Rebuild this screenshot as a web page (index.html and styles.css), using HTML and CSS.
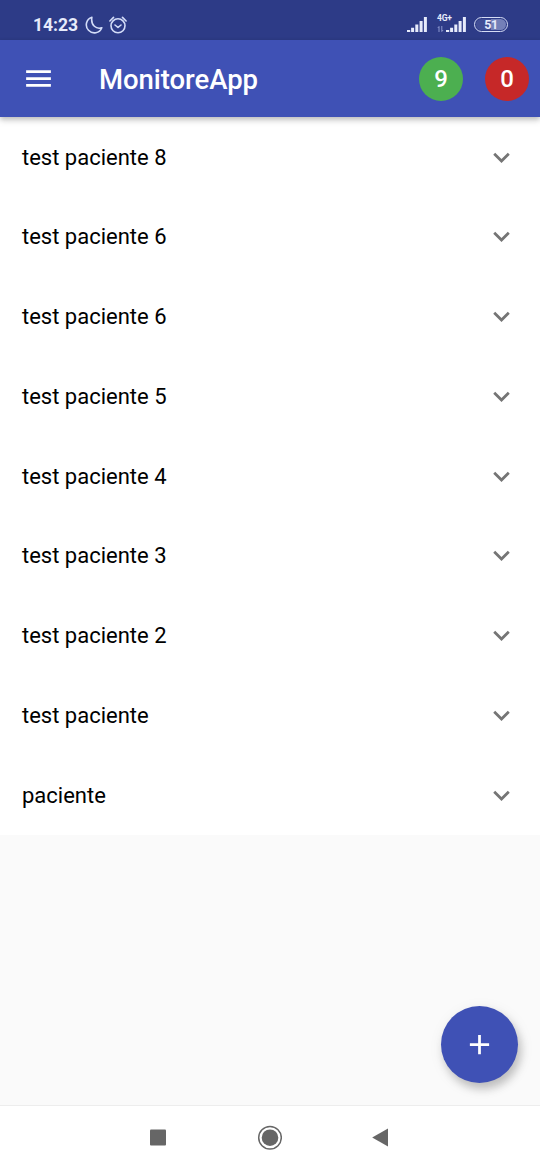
FILE: index.html
```html
<!DOCTYPE html>
<html lang="es">
<head>
<meta charset="utf-8">
<title>MonitoreApp</title>
<link rel="stylesheet" href="styles.css">
</head>
<body>
<svg class="defs" width="0" height="0" aria-hidden="true">
  <symbol id="chevron" viewBox="0 0 24 24"><path d="M16.59 8.59L12 13.17 7.41 8.59 6 10l6 6 6-6z"/></symbol>
  <symbol id="signal" viewBox="0 0 20 15"><path d="M0 13h3.200v2H0zM4.100 10.800h3V15h-3zM8.300 7.500h3V15h-3zM12.600 4h3v11h-3zM16.900 0h3v15h-3z"/></symbol>
</svg>
<div class="screen">
  <div class="status">
    <span class="clock">14:23</span>
    <svg class="moon" viewBox="0 0 18 18"><path d="M6.900 1.200A8 8 0 1 0 16.800 11.700C11.500 13.500 5.500 9.500 6.900 1.200z"/></svg>
    <svg class="alarm" viewBox="0 0 18 18"><circle cx="9" cy="9.800" r="7"/><path d="M6 9l3 2.500L12 9M.9 5L4.500 1.400M17.100 5L13.500 1.400"/></svg>
    <span class="spacer"></span>
    <svg class="signal"><use href="#signal"/></svg>
    <div class="mobile">
      <div class="network"><span class="gen">4G+</span>
        <svg class="traffic" viewBox="0 0 6 6"><path d="M1.500 6V.5L.3 2M4.300 0v5.500L5.600 4"/></svg>
      </div>
      <svg class="signal"><use href="#signal"/></svg>
    </div>
    <div class="battery">51</div>
  </div>
  <header class="appbar">
    <svg class="menu" viewBox="0 0 24 24"><path d="M3 18h18v-2H3v2zm0-5h18v-2H3v2zm0-7v2h18V6H3z"/></svg>
    <h1 class="title">MonitoreApp</h1>
    <span class="badge ok">9</span>
    <span class="badge alert">0</span>
  </header>
  <main class="content">
    <ul class="list">
      <li class="row">test paciente 8<svg class="chevron"><use href="#chevron"/></svg></li>
      <li class="row">test paciente 6<svg class="chevron"><use href="#chevron"/></svg></li>
      <li class="row">test paciente 6<svg class="chevron"><use href="#chevron"/></svg></li>
      <li class="row">test paciente 5<svg class="chevron"><use href="#chevron"/></svg></li>
      <li class="row">test paciente 4<svg class="chevron"><use href="#chevron"/></svg></li>
      <li class="row">test paciente 3<svg class="chevron"><use href="#chevron"/></svg></li>
      <li class="row">test paciente 2<svg class="chevron"><use href="#chevron"/></svg></li>
      <li class="row">test paciente<svg class="chevron"><use href="#chevron"/></svg></li>
      <li class="row">paciente<svg class="chevron"><use href="#chevron"/></svg></li>
    </ul>
    <button class="fab" aria-label="Agregar"><svg viewBox="0 0 24 24"><path d="M19 13h-6v6h-2v-6H5v-2h6V5h2v6h6v2z"/></svg></button>
  </main>
  <nav class="navbar">
    <svg viewBox="0 0 26 26"><rect x="5" y="4.500" width="16" height="16" rx="1"/></svg>
    <svg viewBox="0 0 26 26"><circle cx="14" cy="12.700" r="8.300"/><circle class="ring" cx="14" cy="12.700" r="11.300"/></svg>
    <svg viewBox="0 0 26 26"><path d="M21 3.500v18L5.200 12.500z"/></svg>
  </nav>
</div>
</body>
</html>
```

FILE: styles.css
```css
* { box-sizing: border-box; }
body { margin: 0; font-family: Roboto, sans-serif; }
.defs { display: none; }
.screen { width: 540px; height: 1170px; display: flex; flex-direction: column; background: #fafafa; overflow: hidden; }

.status { height: 40px; flex: none; display: flex; align-items: center; padding: 9px 32px 0 33px; background: #2d3b87; color: #e6ebfb; }
.clock { font-size: 17.500px; font-weight: 700; line-height: 20px; width: 52px; }
.moon, .alarm { width: 18px; height: 18px; fill: none; stroke: #d3dcf8; stroke-width: 1.6; stroke-linejoin: round; stroke-linecap: round; }
.alarm { margin-left: 6px; }
.spacer { flex: 1; }
.signal { width: 20px; height: 15px; fill: #e6ebfb; }
.mobile { display: flex; align-items: flex-end; margin: 0 0 2px 10px; }
.network { width: 9px; height: 17px; display: flex; flex-direction: column; justify-content: space-between; }
.gen { font-size: 8.500px; line-height: 7px; font-weight: 700; letter-spacing: -.2px; white-space: nowrap; }
.traffic { width: 7px; height: 6px; fill: none; stroke: #8d99cf; stroke-width: 1; }
.battery { width: 34px; height: 15px; margin-left: 8px; border: 1.500px solid #d5dcf5; border-radius: 8px; padding: 1px; background: linear-gradient(90deg, #414e96 0 50%, #7480b8 50%) content-box, #2d3b87; font-size: 12.500px; font-weight: 700; line-height: 12px; letter-spacing: -.5px; text-align: center; }

.appbar { height: 77px; flex: none; display: flex; align-items: center; padding: 0 11px 0 22px; background: #3f51b5; color: #fff; position: relative; box-shadow: 0 2px 5px rgba(0,0,0,.2), 0 4px 7px rgba(0,0,0,.1); }
.menu { width: 33px; height: 33px; fill: #fff; }
.title { margin: 2px auto 0 44px; font-size: 27.500px; font-weight: 500; line-height: 44px; letter-spacing: -.05px; }
.badge { width: 44px; height: 44px; border-radius: 50%; font-size: 24px; font-weight: 500; line-height: 44px; text-align: center; }
.ok { background: #4caf50; }
.alert { background: #c62828; margin-left: 22px; }

.content { flex: 1; display: flex; flex-direction: column; }
.list { margin: 0; padding: 0; list-style: none; background: #fff; }
.row { height: 79.750px; display: flex; align-items: center; justify-content: space-between; padding: .7px 22px 0; font-size: 22px; color: #000; }
.chevron { width: 33px; height: 33px; fill: #757575; }
.fab { width: 77px; height: 77px; margin: auto 22px 22px auto; padding: 0; border: 0; border-radius: 50%; background: #3f51b5; display: flex; align-items: center; justify-content: center; box-shadow: 3px 6px 9px rgba(0,0,0,.2), 2px 4px 16px rgba(0,0,0,.08); }
.fab svg { width: 33px; height: 33px; fill: #fff; }

.navbar { height: 65px; flex: none; display: flex; justify-content: space-between; align-items: center; padding: 0 147px 0 145px; background: #fff; border-top: 1px solid #ededed; }
.navbar svg { width: 26px; height: 26px; fill: #666; }
.navbar .ring { fill: none; stroke: #666; stroke-width: 1.500; }
```
